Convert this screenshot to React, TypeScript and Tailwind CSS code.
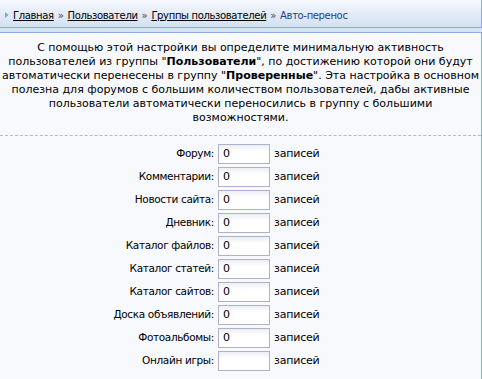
import React from 'react';

const rows = [
  { label: 'Форум:', value: '0' },
  { label: 'Комментарии:', value: '0' },
  { label: 'Новости сайта:', value: '0' },
  { label: 'Дневник:', value: '0' },
  { label: 'Каталог файлов:', value: '0' },
  { label: 'Каталог статей:', value: '0' },
  { label: 'Каталог сайтов:', value: '0' },
  { label: 'Доска объявлений:', value: '0' },
  { label: 'Фотоальбомы:', value: '0' },
  { label: 'Онлайн игры:', value: '' },
];

export default function App() {
  return (
    <div
      className="w-[482px] h-[379px] overflow-hidden bg-[#d6e3f6] text-[11px] text-black"
      style={{ fontFamily: 'Tahoma, "DejaVu Sans", sans-serif' }}
    >
      <div className="h-[28px] flex items-center pt-[3px] pl-[5px] border-r border-b border-[#8eacdf] bg-gradient-to-b from-[#f6f8fc] to-[#d3e0f4] text-[10px] tracking-[-0.35px]">
        <svg width="4" height="6" viewBox="0 0 4 6" className="mr-[4px]">
          <polygon points="0,0 3.5,3 0,6" fill="#7b9fdc" />
        </svg>
        <a className="underline text-black">Главная</a>
        <span className="mx-[4px] text-[#444]">»</span>
        <a className="underline text-black">Пользователи</a>
        <span className="mx-[4px] text-[#444]">»</span>
        <a className="underline text-black">Группы пользователей</a>
        <span className="mx-[4px] text-[#444]">»</span>
        <span className="text-[#1d3f8e]">Авто-перенос</span>
      </div>
      <div className="mt-[4px] h-[347px] bg-[#f7f9fd] border-t border-r border-[#8eacdf]">
        <p className="pt-[8px] pb-[10px] text-center leading-[14px] whitespace-nowrap">
          С помощью этой настройки вы определите минимальную активность
          <br />
          пользователей из группы "<b>Пользователи</b>", по достижению которой они будут
          <br />
          автоматически перенесены в группу "<b>Проверенные</b>". Эта настройка в основном
          <br />
          полезна для форумов с большим количеством пользователей, дабы активные
          <br />
          пользователи автоматически переносились в группу с большими
          <br />
          возможностями.
        </p>
        <div className="border-t border-dashed border-[#a7bce4]" />
        <div className="pt-[8px] flex flex-col gap-[3px]">
          {rows.map((r) => (
            <div key={r.label} className="flex items-center h-[20px]">
              <div className="w-[218px] text-right pr-[4px] text-[10.5px] tracking-[-0.35px]">{r.label}</div>
              <div className="w-[52px] h-[20px] border border-[#aeb1c9] bg-gradient-to-b from-[#eceef2] to-white to-[35%] flex items-center pl-[4px]">
                {r.value}
              </div>
              <div className="pl-[4px] tracking-[-0.2px]">записей</div>
            </div>
          ))}
        </div>
      </div>
    </div>
  );
}
